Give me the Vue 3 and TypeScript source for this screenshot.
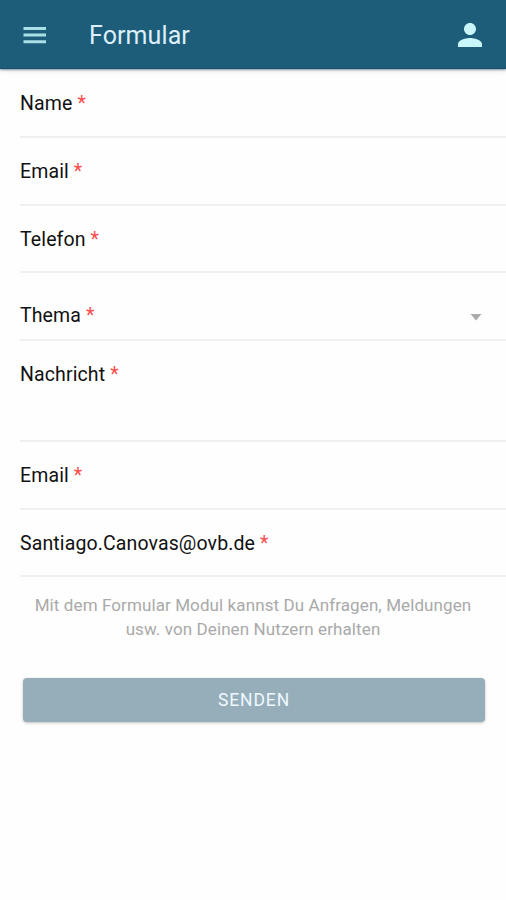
<script setup lang="ts">
interface Field {
  id: string
  label: string
  kind: 'text' | 'short' | 'select' | 'area'
}

const fields: Field[] = [
  { id: 'name', label: 'Name', kind: 'text' },
  { id: 'email', label: 'Email', kind: 'text' },
  { id: 'phone', label: 'Telefon', kind: 'short' },
  { id: 'topic', label: 'Thema', kind: 'select' },
  { id: 'message', label: 'Nachricht', kind: 'area' },
  { id: 'email2', label: 'Email', kind: 'text' },
  { id: 'recipient', label: 'Santiago.Canovas@ovb.de', kind: 'short' },
]
</script>

<template>
  <div class="screen">
    <header class="bar">
      <svg class="menu" viewBox="0 0 24 18" width="24" height="18">
        <path d="M0.5 1h22.500v3h-22.500zM0.5 7.600h22.500v3h-22.500zM0.5 14.200h22.500v3h-22.500z" />
      </svg>
      <h1 class="title">Formular</h1>
      <svg class="person" viewBox="4 4 16 16" width="24" height="24">
        <path d="M12 12c2.210 0 4-1.790 4-4s-1.790-4-4-4-4 1.790-4 4 1.790 4 4 4zm0 2c-2.670 0-8 1.340-8 4v2h16v-2c0-2.660-5.330-4-8-4z" />
      </svg>
    </header>
    <main class="form">
      <div v-for="field in fields" :key="field.id" class="row" :class="field.kind">
        <span class="label">{{ field.label }} <span class="star">*</span></span>
        <svg v-if="field.kind === 'select'" class="caret" viewBox="0 0 12 7" width="12" height="7">
          <path d="M0.500 0h11l-5.500 6.500z" />
        </svg>
      </div>
      <p class="note">Mit dem Formular Modul kannst Du Anfragen, Meldungen<br />usw. von Deinen Nutzern erhalten</p>
      <button class="send" type="button">SENDEN</button>
    </main>
  </div>
</template>

<style>
body {
  margin: 0;
  background: #fefefe;
}
</style>

<style scoped>
.screen {
  height: 900px;
  overflow: hidden;
  background: #fefefe;
  font-family: Roboto, "Liberation Sans", sans-serif;
}
.bar {
  display: flex;
  align-items: center;
  box-sizing: border-box;
  height: 69px;
  padding: 2px 24px 0 23px;
  background: #1e5d79;
  border-bottom: 1px solid #18526f;
  box-shadow: 0 1px 2px rgba(20, 60, 90, 0.5), 0 3px 5px rgba(0, 0, 0, 0.06);
}
.menu {
  fill: #a9e0e6;
}
.title {
  flex: 1;
  margin: 1px 0 0 42px;
  color: #dceffa;
  font-size: 25px;
  font-weight: 400;
  line-height: 30px;
  letter-spacing: 0.1px;
}
.person {
  fill: #c8f6fa;
}
.form {
  padding-top: 1px;
}
.row {
  display: flex;
  align-items: center;
  justify-content: space-between;
  box-sizing: border-box;
  height: 68px;
  margin-left: 20px;
  border-bottom: 2px solid #f0f0f0;
}
.short {
  height: 67px;
}
.label {
  padding-top: 2px;
  color: #111;
  font-size: 19.5px;
  line-height: 24px;
  letter-spacing: 0.12px;
}
.star {
  color: #ff4b4b;
}
.select {
  padding: 18px 24px 0 0;
}
.caret {
  margin-top: 5px;
  fill: #aaa;
}
.area {
  align-items: flex-start;
  height: 101px;
  padding-top: 20px;
}
.note {
  margin: 16px 0 0;
  color: #a9a9a9;
  font-size: 17px;
  line-height: 24px;
  letter-spacing: 0.1px;
  text-align: center;
}
.send {
  display: block;
  width: 462px;
  height: 44px;
  margin: 37px 0 0 23px;
  padding: 0;
  border: 0;
  border-radius: 4px;
  background: #96aeba;
  box-shadow: 0 1px 3px rgba(0, 0, 0, 0.25);
  color: #eff8fe;
  font-family: inherit;
  font-size: 17.5px;
  letter-spacing: 0.9px;
}
</style>
